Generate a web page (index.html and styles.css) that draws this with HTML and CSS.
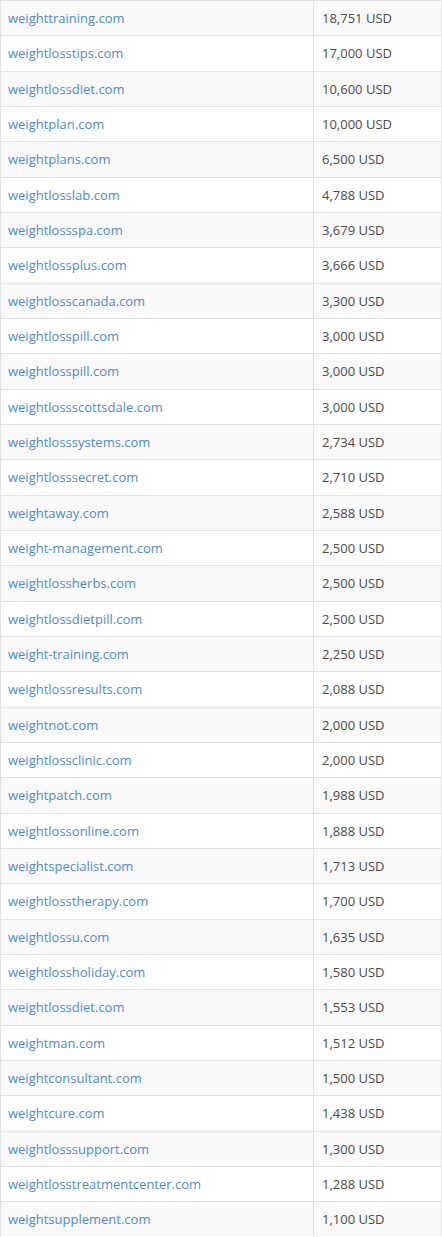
FILE: index.html
```html
<!DOCTYPE html>
<html>
<head>
<meta charset="utf-8">
<link rel="stylesheet" href="styles.css">
</head>
<body>
<table class="prices">
<colgroup><col class="col-name"><col class="col-price"></colgroup>
<tbody>
<tr><td class="name"><a href="#">weighttraining.com</a></td><td class="price">18,751 USD</td></tr>
<tr><td class="name"><a href="#">weightlosstips.com</a></td><td class="price">17,000 USD</td></tr>
<tr><td class="name"><a href="#">weightlossdiet.com</a></td><td class="price">10,600 USD</td></tr>
<tr><td class="name"><a href="#">weightplan.com</a></td><td class="price">10,000 USD</td></tr>
<tr><td class="name"><a href="#">weightplans.com</a></td><td class="price">6,500 USD</td></tr>
<tr><td class="name"><a href="#">weightlosslab.com</a></td><td class="price">4,788 USD</td></tr>
<tr><td class="name"><a href="#">weightlossspa.com</a></td><td class="price">3,679 USD</td></tr>
<tr><td class="name"><a href="#">weightlossplus.com</a></td><td class="price">3,666 USD</td></tr>
<tr><td class="name"><a href="#">weightlosscanada.com</a></td><td class="price">3,300 USD</td></tr>
<tr><td class="name"><a href="#">weightlosspill.com</a></td><td class="price">3,000 USD</td></tr>
<tr><td class="name"><a href="#">weightlosspill.com</a></td><td class="price">3,000 USD</td></tr>
<tr><td class="name"><a href="#">weightlossscottsdale.com</a></td><td class="price">3,000 USD</td></tr>
<tr><td class="name"><a href="#">weightlosssystems.com</a></td><td class="price">2,734 USD</td></tr>
<tr><td class="name"><a href="#">weightlosssecret.com</a></td><td class="price">2,710 USD</td></tr>
<tr><td class="name"><a href="#">weightaway.com</a></td><td class="price">2,588 USD</td></tr>
<tr><td class="name"><a href="#">weight-management.com</a></td><td class="price">2,500 USD</td></tr>
<tr><td class="name"><a href="#">weightlossherbs.com</a></td><td class="price">2,500 USD</td></tr>
<tr><td class="name"><a href="#">weightlossdietpill.com</a></td><td class="price">2,500 USD</td></tr>
<tr><td class="name"><a href="#">weight-training.com</a></td><td class="price">2,250 USD</td></tr>
<tr><td class="name"><a href="#">weightlossresults.com</a></td><td class="price">2,088 USD</td></tr>
<tr><td class="name"><a href="#">weightnot.com</a></td><td class="price">2,000 USD</td></tr>
<tr><td class="name"><a href="#">weightlossclinic.com</a></td><td class="price">2,000 USD</td></tr>
<tr><td class="name"><a href="#">weightpatch.com</a></td><td class="price">1,988 USD</td></tr>
<tr><td class="name"><a href="#">weightlossonline.com</a></td><td class="price">1,888 USD</td></tr>
<tr><td class="name"><a href="#">weightspecialist.com</a></td><td class="price">1,713 USD</td></tr>
<tr><td class="name"><a href="#">weightlosstherapy.com</a></td><td class="price">1,700 USD</td></tr>
<tr><td class="name"><a href="#">weightlossu.com</a></td><td class="price">1,635 USD</td></tr>
<tr><td class="name"><a href="#">weightlossholiday.com</a></td><td class="price">1,580 USD</td></tr>
<tr><td class="name"><a href="#">weightlossdiet.com</a></td><td class="price">1,553 USD</td></tr>
<tr><td class="name"><a href="#">weightman.com</a></td><td class="price">1,512 USD</td></tr>
<tr><td class="name"><a href="#">weightconsultant.com</a></td><td class="price">1,500 USD</td></tr>
<tr><td class="name"><a href="#">weightcure.com</a></td><td class="price">1,438 USD</td></tr>
<tr><td class="name"><a href="#">weightlosssupport.com</a></td><td class="price">1,300 USD</td></tr>
<tr><td class="name"><a href="#">weightlosstreatmentcenter.com</a></td><td class="price">1,288 USD</td></tr>
<tr><td class="name"><a href="#">weightsupplement.com</a></td><td class="price">1,100 USD</td></tr>
</tbody>
</table>
</body>
</html>
```
FILE: styles.css
```css
html, body {
  margin: 0;
  padding: 0;
  background: #fff;
}
body {
  font-family: "Open Sans", "Liberation Sans", sans-serif;
  font-size: 13px;
  color: #4a4a4a;
}
.prices {
  width: 442px;
  table-layout: fixed;
  border-collapse: collapse;
  border-left: 1px solid #e2e2e2;
  border-right: 1px solid #e2e2e2;
}
.col-name {
  width: 313px;
}
.prices td {
  border-top: 1px solid #e2e2e2;
  padding: 8px 8px 8px 7px;
  line-height: 18.33px;
  vertical-align: middle;
  white-space: nowrap;
}
.prices td.price {
  border-left: 1px solid #e2e2e2;
  padding-left: 8px;
}
.prices tr:nth-child(odd) td {
  background: #f9f9f9;
}
.prices a {
  color: #4f8bc9;
  text-decoration: none;
}
```
